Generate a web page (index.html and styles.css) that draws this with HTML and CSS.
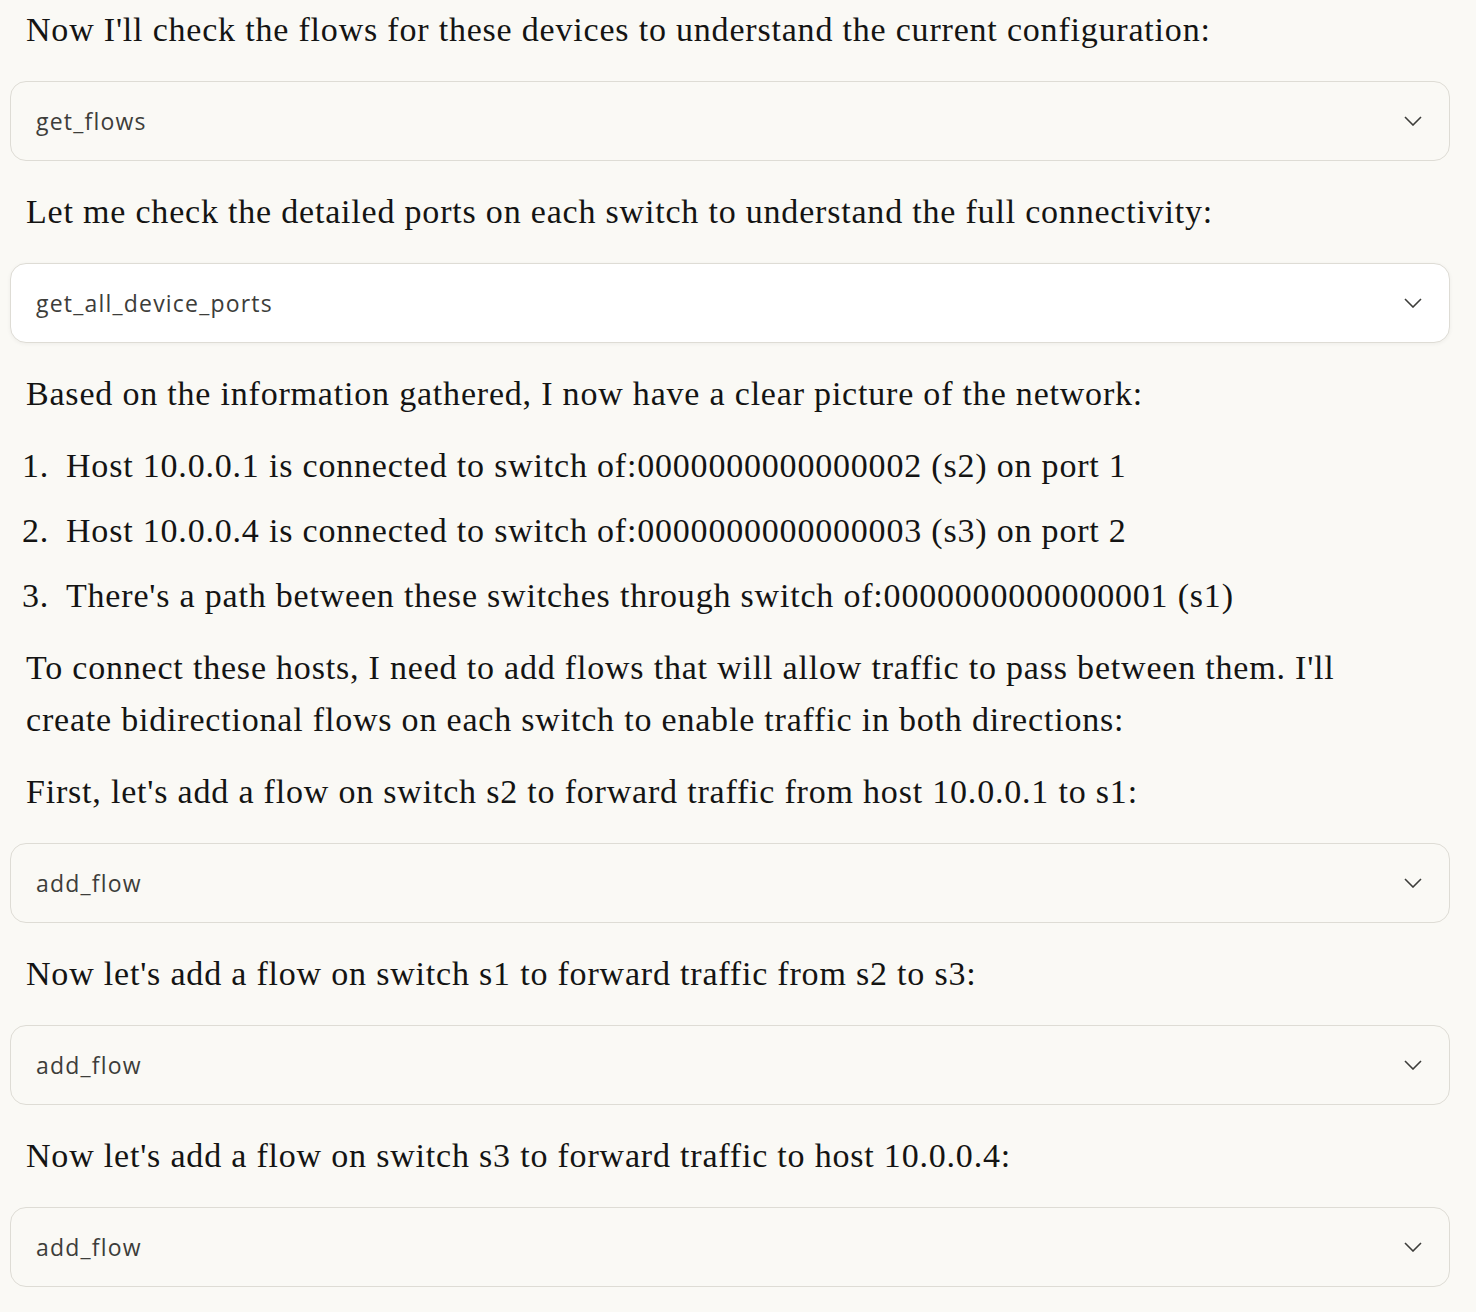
FILE: index.html
```html
<!DOCTYPE html>
<html lang="en">
<head>
<meta charset="utf-8">
<title>Flows</title>
<link rel="stylesheet" href="styles.css">
</head>
<body>
<div class="thread">
  <p class="para">Now I'll check the flows for these devices to understand the current configuration:</p>
  <div class="tool">
    <span class="tool-name">get_flows</span>
    <svg class="chev" width="18" height="10" viewBox="0 0 18 10"><path d="M1 1 L9 9 L17 1" fill="none" stroke="#3d3d3a" stroke-width="1.6"/></svg>
  </div>
  <p class="para">Let me check the detailed ports on each switch to understand the full connectivity:</p>
  <div class="tool tool-active">
    <span class="tool-name">get_all_device_ports</span>
    <svg class="chev" width="18" height="10" viewBox="0 0 18 10"><path d="M1 1 L9 9 L17 1" fill="none" stroke="#3d3d3a" stroke-width="1.6"/></svg>
  </div>
  <p class="para">Based on the information gathered, I now have a clear picture of the network:</p>
  <ol class="steps">
    <li>Host 10.0.0.1 is connected to switch of:0000000000000002 (s2) on port 1</li>
    <li>Host 10.0.0.4 is connected to switch of:0000000000000003 (s3) on port 2</li>
    <li>There's a path between these switches through switch of:0000000000000001 (s1)</li>
  </ol>
  <p class="para">To connect these hosts, I need to add flows that will allow traffic to pass between them. I'll create bidirectional flows on each switch to enable traffic in both directions:</p>
  <p class="para">First, let's add a flow on switch s2 to forward traffic from host 10.0.0.1 to s1:</p>
  <div class="tool">
    <span class="tool-name">add_flow</span>
    <svg class="chev" width="18" height="10" viewBox="0 0 18 10"><path d="M1 1 L9 9 L17 1" fill="none" stroke="#3d3d3a" stroke-width="1.6"/></svg>
  </div>
  <p class="para">Now let's add a flow on switch s1 to forward traffic from s2 to s3:</p>
  <div class="tool">
    <span class="tool-name">add_flow</span>
    <svg class="chev" width="18" height="10" viewBox="0 0 18 10"><path d="M1 1 L9 9 L17 1" fill="none" stroke="#3d3d3a" stroke-width="1.6"/></svg>
  </div>
  <p class="para">Now let's add a flow on switch s3 to forward traffic to host 10.0.0.4:</p>
  <div class="tool">
    <span class="tool-name">add_flow</span>
    <svg class="chev" width="18" height="10" viewBox="0 0 18 10"><path d="M1 1 L9 9 L17 1" fill="none" stroke="#3d3d3a" stroke-width="1.6"/></svg>
  </div>
</div>
</body>
</html>
```

FILE: styles.css
```css
html, body {
  margin: 0;
  padding: 0;
  background: #faf9f5;
}

.thread {
  width: 1440px;
  margin-left: 10px;
  padding-top: 4px;
  display: flex;
  flex-direction: column;
}

.para {
  margin: 0 0 20px 0;
  padding: 0 64px 0 16px;
  font-family: "Liberation Serif", "Times New Roman", serif;
  font-size: 34px;
  letter-spacing: 0.8px;
  line-height: 52px;
  color: #141413;
}

.tool {
  box-sizing: border-box;
  height: 80px;
  margin: 5px 0 25px 0;
  border: 1px solid #dedcd5;
  border-radius: 16px;
  background: #faf9f5;
  display: flex;
  align-items: center;
  justify-content: space-between;
  padding: 0 27px 0 25px;
}

.tool-active {
  background: #ffffff;
  box-shadow: 0 1px 4px rgba(0, 0, 0, 0.05);
}

.tool-name {
  font-family: "Open Sans", "Noto Sans", sans-serif;
  font-size: 23px;
  color: #3d3d3a;
  letter-spacing: 1.2px;
}

.chev {
  display: block;
}

.steps {
  list-style: none;
  counter-reset: step;
  margin: 0 0 20px 0;
  padding: 0;
  font-family: "Liberation Serif", "Times New Roman", serif;
  font-size: 34px;
  letter-spacing: 0.8px;
  line-height: 52px;
  color: #141413;
}

.steps li {
  counter-increment: step;
  display: flex;
  margin-bottom: 13px;
}

.steps li::before {
  content: counter(step) ".";
  flex: none;
  width: 39px;
  margin-right: 17px;
  text-align: right;
}

.steps li:last-child {
  margin-bottom: 0;
}
```
